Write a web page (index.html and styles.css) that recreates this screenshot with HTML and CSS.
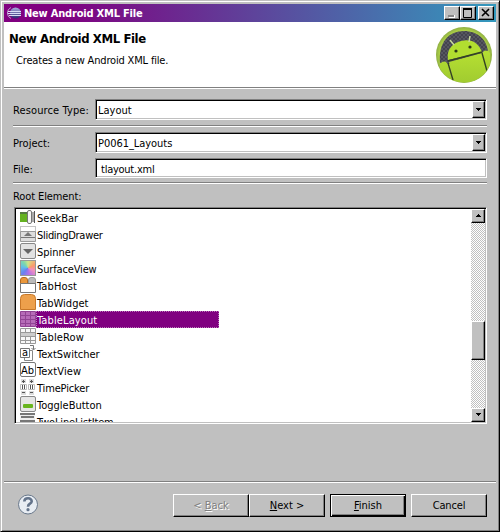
FILE: index.html
```html
<!DOCTYPE html>
<html lang="en">
<head>
<meta charset="utf-8">
<title>New Android XML File</title>
<link rel="stylesheet" href="styles.css">
</head>
<body>
<main class="window">
  <div class="titlebar">
    <svg class="eclipse" width="15" height="14" viewBox="0 0 15 14"><defs><linearGradient id="ball" x2="0" y2="1"><stop stop-color="#a9aede"/><stop offset="1" stop-color="#2b2670"/></linearGradient></defs><path d="M4 1.500A6 6 0 0 0 4 12.500" fill="none" stroke="#b9a2d0"/><circle cx="8.500" cy="7" r="5.500" fill="url(#ball)"/><path d="M1 5.500h13M1 7.500h13M2 9.500h12" stroke="#d9dcf6"/></svg>
    <span class="title">New Android XML File</span>
    <button class="cap"><svg width="12" height="10"><path d="M3 8.500h6" stroke="#fff" stroke-width="3"/><path d="M2 8h6" stroke="#888" stroke-width="2"/></svg></button>
    <button class="cap"><svg width="12" height="10"><path d="M1.500 1v8.500h8V1" fill="none" stroke="#000"/><path d="M1 1h9" stroke="#000" stroke-width="2"/></svg></button>
    <button class="cap close"><svg width="12" height="10"><path d="M2 1l7 7M9 1L2 8" stroke="#000" stroke-width="1.600"/></svg></button>
  </div>
  <header class="banner">
    <div>
      <h1>New Android XML File</h1>
      <p>Creates a new Android XML file.</p>
    </div>
    <svg class="robot" width="58" height="58" viewBox="0 0 58 58">
      <defs>
        <radialGradient id="rim"><stop offset=".84" stop-color="#b4da45"/><stop offset="1" stop-color="#8fae45"/></radialGradient>
        <pattern id="mesh" width="4" height="4" patternUnits="userSpaceOnUse"><path fill="#44444e" d="M0 0h4v4H0z"/><path fill="#565661" d="M0 0h2v2H0zM2 2h2v2H2z"/></pattern>
        <clipPath id="disc"><circle cx="29" cy="29" r="27.500"/></clipPath>
        <linearGradient id="body" x2="0" y2="1"><stop stop-color="#b5df32"/><stop offset="1" stop-color="#9fca30"/></linearGradient>
      </defs>
      <circle cx="29" cy="29" r="28" fill="url(#rim)"/>
      <g clip-path="url(#disc)">
        <path d="M5 37C3 16 14 5 29 5c14 0 23 9 24 21L14 38z" fill="url(#mesh)"/>
        <path d="M13 34c-2-11 5-17 13-19 10-3 18 2 21 11z" fill="#b2de30"/>
        <path d="M5 38c3-4 7-3 8 1l5 17H5zM47 28c1-4 5-5 8-1v15l-4 3z" fill="url(#body)"/>
        <path d="M14 36l33-9 5 18-7 14H20z" fill="url(#body)"/>
        <path d="M13 35l34-9M13 37l5 17M47 27l5 18" fill="none" stroke="#344323" stroke-width="1.400"/>
      </g>
      <path d="M15 14l4 5M35 10l-1 6" stroke="#c7d99b" stroke-width="1.500"/>
      <circle cx="21" cy="25" r="1.600" fill="#2c3918"/><circle cx="35" cy="21" r="1.600" fill="#2c3918"/>
    </svg>
  </header>
  <section class="form">
    <div class="row"><label class="lt">Resource Type:</label><div class="field combo"><span class="v1">Layout</span><button class="drop"><svg width="7" height="4"><path d="M1 0h5v1H5v1H4v1H3V2H2V1H1z"/></svg></button></div></div>
    <hr>
    <div class="row"><label>Project:</label><div class="field combo"><span class="v2">P0061_Layouts</span><button class="drop"><svg width="7" height="4"><path d="M1 0h5v1H5v1H4v1H3V2H2V1H1z"/></svg></button></div></div>
    <div class="row file"><label>File:</label><div class="field"><span class="v3">tlayout.xml</span></div></div>
    <hr class="after-file">
    <div class="root">Root Element:</div>
    <div class="list">
      <ul>
        <li><svg width="16" height="16"><path d="M0 3h7v10H0z" fill="#65b222"/><path d="M0 3h7v2H0z" fill="#557b41"/><path d="M11 3h4v10h-4z" fill="#aaa"/><path d="M14.500 2v12" stroke="#555"/><rect x="7.500" y="1.500" width="4" height="13" rx="1.500" fill="#f6f6f6" stroke="#777"/></svg><span>SeekBar</span></li>
        <li><svg width="16" height="16"><path d="M.5.5h15v9H.5z" fill="#fff" stroke="#888" stroke-dasharray="1 1"/><path d="M.5 5.500h15v10H.5z" fill="#ddd" stroke="#999"/><path d="M1 11.500h14" stroke="#777"/><path d="M4 10l4-4 4 4z" fill="#777"/></svg><span class="tight">SlidingDrawer</span></li>
        <li><svg width="16" height="16"><rect x=".5" y=".5" width="15" height="15" rx="1.500" fill="#e2e2e2" stroke="#888"/><path d="M3 6h10l-5 5z" fill="#666"/></svg><span>Spinner</span></li>
        <li><i class="rainbow"></i><span class="snug">SurfaceView</span></li>
        <li><svg width="16" height="16"><path d="M.5 6.500V3Q.5.500 3 .5h2Q7.500.5 7.500 3v3.500z" fill="#e9973c" stroke="#b76b20"/><path d="M8.500 6.500V3Q8.500.5 11 .5h2q2.500 0 2.500 2.500v3.500z" fill="#bbb" stroke="#999"/><path d="M.5 6.500h15v9H.5z" fill="#fff" stroke="#777"/></svg><span class="wide">TabHost</span></li>
        <li><svg width="16" height="16"><path d="M.5 15.500V4.500Q.5.500 4.500.5h7Q15.500.5 15.500 4.500v11z" fill="#eda04b" stroke="#c87828"/></svg><span>TabWidget</span></li>
        <li class="on"><svg width="16" height="16"><path d="M.5.5h15v15H.5zM.5 4.500h15M.5 8.500h15M.5 12.500h15M5.500 1v14M10.500 1v14" fill="#b66bb8" stroke="#914494"/></svg><span class="wide">TableLayout</span></li>
        <li><svg width="16" height="16"><path d="M.5.5h15v15H.5z" fill="#f8f8f8"/><path d="M1 5h14v4H1z" fill="#ccc"/><path d="M.5.5h15v15H.5zM.5 4.500h15M.5 8.500h15M.5 12.500h15M5.500 1v4M10.500 1v4M5.500 9v6M10.500 9v6" fill="none" stroke="#999"/></svg><span class="wide">TableRow</span></li>
        <li><svg width="16" height="16"><path d="M4.500 5.500h8v10h-8z" fill="#fff" stroke="#888"/><path d="M.5 3.500h9v9h-9z" fill="#fff" stroke="#777"/><path d="M10 .5h3.500v4M11.500 3l2 2 2-2" fill="none" stroke="#777"/><text x="2" y="11" class="glyph">a</text></svg><span>TextSwitcher</span></li>
        <li><svg width="16" height="16"><rect x=".5" y=".5" width="15" height="14" rx="1.500" fill="#fff" stroke="#777"/><text x="1" y="12" class="glyph">Ab</text></svg><span class="wide">TextView</span></li>
        <li><svg width="16" height="16"><path d="M1 0h5v4H1zM9 0h5v4H9zM1 12h5v4H1zM9 12h5v4H9z" fill="#ddd"/><path d="M.5 5.500h6v5h-6zM8.500 5.500h6v5h-6z" fill="#fff" stroke="#bbb"/><path d="M3.500 1v3M2 2.500h3M11.500 1v3M10 2.500h3M2 13.500h3M10 13.500h3M2.500 6v4M4.500 6v4M10.500 6v4M12.500 6v4" stroke="#555"/></svg><span class="snug">TimePicker</span></li>
        <li><svg width="16" height="16"><rect x=".5" y=".5" width="15" height="15" rx="1.500" fill="#e6e6e6" stroke="#888"/><rect x="3" y="8" width="10" height="4" rx="1" fill="#69b51f"/></svg><span>ToggleButton</span></li>
        <li><svg width="16" height="16"><path d="M0 0h15v16H0z" fill="#eee"/><path d="M0 1h15M1 4h13M0 8h15" stroke="#777" stroke-width="2"/></svg><span class="snug">TwoLineListItem</span></li>
      </ul>
      <div class="scroll">
        <button><svg width="7" height="4"><path d="M3 0h1v1h1v1h1v1H1V2h1V1h1z"/></svg></button>
        <div class="thumb"></div>
        <button><svg width="7" height="4"><path d="M1 0h5v1H5v1H4v1H3V2H2V1H1z"/></svg></button>
      </div>
    </div>
  </section>
  <footer>
    <svg class="help" width="22" height="22"><circle cx="11" cy="10.500" r="9.500" fill="#e8edf3" stroke="#69788b"/><path d="M7.300 7.500c.3-4.500 7.700-4 7.400 0-.2 2.500-3.700 2-3.700 5.200" fill="none" stroke="#64748b" stroke-width="2.600"/><circle cx="11" cy="15.700" r="1.600" fill="#64748b"/></svg>
    <button class="push disabled"><span>&lt; <u>B</u>ack</span></button>
    <button class="push"><span><u>N</u>ext &gt;</span></button>
    <button class="push default"><span><u>F</u>inish</span></button>
    <button class="push"><span class="snug">Cancel</span></button>
  </footer>
</main>
</body>
</html>
```
FILE: styles.css
```css
* { box-sizing: border-box; }
body { margin: 0; font: 11px/13px "DejaVu Sans Condensed", "DejaVu Sans", sans-serif; font-stretch: condensed; color: #000; overflow: hidden; }
button { font: inherit; margin: 0; padding: 0; background: #c0c0c0; border: 1px solid; border-color: #fff #000 #000 #fff; box-shadow: inset -1px -1px #808080; border-radius: 0; display: flex; align-items: center; justify-content: center; flex: none; }
svg { display: block; flex: none; }
.window { width: 500px; height: 532px; background: #c0c0c0; border: 1px solid; border-color: #c0c0c0 #000 #000 #c0c0c0; box-shadow: inset 1px 1px #fff, inset -1px -1px #808080; padding: 3px; display: flex; flex-direction: column; }
.titlebar { height: 18px; display: flex; align-items: center; background: linear-gradient(90deg, #800080 12%, #3399bd); padding: 0 2px 0 3px; }
.title { color: #fff; font-weight: bold; letter-spacing: -.2px; margin-left: 2px; flex: 1; white-space: nowrap; }
.cap { width: 16px; height: 14px; }
.close { margin-left: 2px; }
.banner { height: 65px; background: #fff; display: flex; justify-content: space-between; padding: 4px 3px 0 5px; }
h1 { font-size: 13px; line-height: 16px; margin: 5px 0 0; letter-spacing: -.4px; }
p { margin: 7px 0 0 7px; letter-spacing: -.17px; }
.form { height: 394px; border-top: 1px solid #808080; box-shadow: inset 0 1px #fff; padding: 11px 9px 0 9px; }
.row { height: 21px; display: flex; align-items: center; }
.row label { width: 82px; white-space: nowrap; padding-top: 2px; }
.row .lt { letter-spacing: .12px; }
.field { flex: 1; height: 100%; background: #fff; border: 1px solid; border-color: #808080 #fff #fff #808080; box-shadow: inset 1px 1px #000, inset -1px -1px #c0c0c0; padding: 1px 1px 1px 2px; display: flex; align-items: center; }
.field span { padding-top: 2px; }
.combo { justify-content: space-between; }
.drop { width: 13px; height: 17px; }
.file { margin-top: 5px; height: 20px; }
.v2 { letter-spacing: -.05px; }
.v3 { padding-left: 3px; letter-spacing: -.25px; }
hr { border: 0; border-top: 1px solid #808080; border-bottom: 1px solid #fff; height: 2px; margin: 5px 0; }
.after-file { margin-top: 4px; }
.root { height: 18px; padding-top: 1px; letter-spacing: -.1px; }
.list { margin-left: 1px; height: 217px; background: #fff; border: 1px solid; border-color: #808080 #fff #fff #808080; box-shadow: inset 1px 1px #000, inset -1px -1px #c0c0c0; padding: 1px; display: flex; justify-content: space-between; }
ul { list-style: none; margin: 0; padding: 0 0 0 4px; height: 213px; overflow: hidden; }
li { height: 17px; display: flex; align-items: flex-start; width: 199px; }
li span { flex: 1; line-height: 19px; height: 17px; padding-left: 1px; white-space: nowrap; }
.tight { letter-spacing: -.3px; }
.snug { letter-spacing: -.15px; }
.wide { letter-spacing: .12px; }
.on span { background: #800080; color: #fff; outline: 1px dotted #bb75bb; outline-offset: -1px; }
.rainbow { width: 16px; height: 16px; border: 1px solid #999; background: conic-gradient(#cde58a, #fb9a6a 18%, #f08fc0 32%, #b070e8 48%, #6a80f0 62%, #60c0e8 78%, #80d8a8 90%, #cde58a); }
.glyph { font-size: 11px; }
.scroll { width: 14px; height: 213px; background: repeating-conic-gradient(#fff 0 25%, #c0c0c0 0 50%) 0 0 / 2px 2px; display: flex; flex-direction: column; justify-content: space-between; }
.scroll button { width: 14px; height: 14px; }
.thumb { height: 39px; margin-top: 50px; background: #c0c0c0; border: 1px solid; border-color: #fff #000 #000 #fff; box-shadow: inset -1px -1px #808080; }
footer { flex: 1; border-top: 1px solid #808080; box-shadow: inset 0 1px #fff; display: flex; padding: 12px 9px 0 13px; }
.help { margin-right: auto; }
.push { width: 76px; height: 23px; }
.default { border-color: #000; box-shadow: inset 1px 1px #fff, inset -1px -1px #000, inset -2px -2px #808080; margin: 0 5px; }
.disabled { color: #808080; text-shadow: 1px 1px #fff; }
```
